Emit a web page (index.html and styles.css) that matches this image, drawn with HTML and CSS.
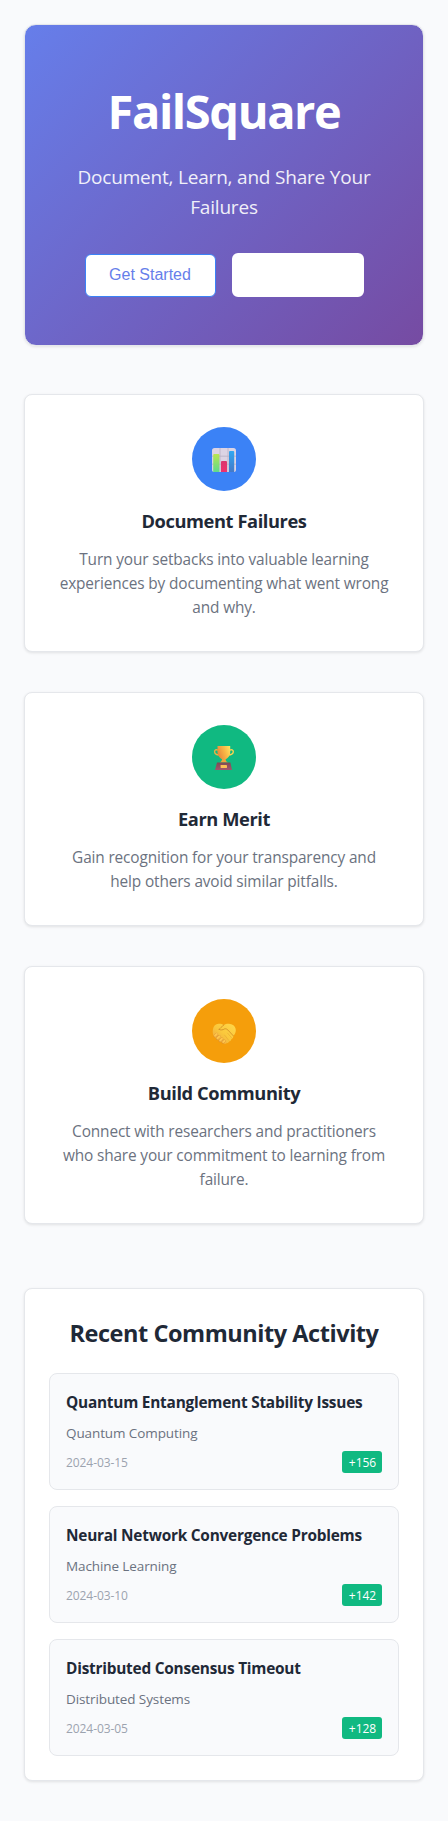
FILE: index.html
```html
<!DOCTYPE html>
<html lang="en">
<head>
<meta charset="utf-8">
<meta name="viewport" content="width=device-width, initial-scale=1">
<title>FailSquare</title>
<link rel="stylesheet" href="styles.css">
</head>
<body>
<main class="page">
  <section class="hero">
    <h1 class="hero-title">FailSquare</h1>
    <p class="hero-subtitle">Document, Learn, and Share Your Failures</p>
    <div class="hero-actions">
      <button class="btn btn-primary" type="button">Get Started</button>
      <button class="btn btn-blank" type="button"></button>
    </div>
  </section>

  <section class="features">
    <article class="card feature">
      <div class="feature-icon feature-icon-blue">
        <svg viewBox="0 0 64 64" width="64" height="64" aria-hidden="true">
          <defs>
            <linearGradient id="barGreen" x1="0" y1="0" x2="0" y2="1"><stop offset="0" stop-color="#b9e650"/><stop offset="1" stop-color="#5edb8c"/></linearGradient>
            <linearGradient id="barRed" x1="0" y1="0" x2="0" y2="1"><stop offset="0" stop-color="#d9366f"/><stop offset="1" stop-color="#f02f6e"/></linearGradient>
            <linearGradient id="barBlue" x1="0" y1="0" x2="0" y2="1"><stop offset="0" stop-color="#30a8f2"/><stop offset="1" stop-color="#4479c8"/></linearGradient>
          </defs>
          <rect x="20" y="21" width="24" height="24" rx="2.6" fill="#dcd4e4"/>
          <path d="M28 21v24M36 21v24M20 29.2h24M20 37.2h24" stroke="#b9b0c4" stroke-width=".8"/>
          <path d="M21.2 45V28a1 1 0 0 1 1-1h4.200a1 1 0 0 1 1 1v17z" fill="url(#barGreen)"/>
          <path d="M29 45V35a1 1 0 0 1 1-1h4a1 1 0 0 1 1 1v10z" fill="url(#barRed)"/>
          <path d="M37 45V25a1 1 0 0 1 1-1h3.200a1 1 0 0 1 1 1v20z" fill="url(#barBlue)"/>
        </svg>
      </div>
      <h3 class="feature-title">Document Failures</h3>
      <p class="feature-text">Turn your setbacks into valuable learning experiences by documenting what went wrong and why.</p>
    </article>

    <article class="card feature">
      <div class="feature-icon feature-icon-green">
        <svg viewBox="0 0 64 64" width="64" height="64" aria-hidden="true">
          <defs>
            <linearGradient id="cup" x1="0" y1=".4" x2="1" y2="0"><stop offset="0" stop-color="#e98b3c"/><stop offset=".5" stop-color="#f8b746"/><stop offset="1" stop-color="#ffe763"/></linearGradient>
            <linearGradient id="base" x1="0" y1="0" x2="0" y2="1"><stop offset="0" stop-color="#7d4a52"/><stop offset="1" stop-color="#a3566e"/></linearGradient>
          </defs>
          <path d="M26 25.2c-2-1-3.400-.2-3.400 1.500 0 2 2.100 3.300 4.500 3.200" fill="none" stroke="#efae42" stroke-width="1.4"/>
          <path d="M37.600 25.200c2-1 3.700-.2 3.700 1.500 0 2-2.400 3.300-4.800 3.200" fill="none" stroke="#ffd24e" stroke-width="1.4"/>
          <path d="M30.200 33h3.200c.1 2.400.6 3.500 2.600 4.600h-8.400c2-1.100 2.500-2.200 2.600-4.600z" fill="#eda53d"/>
          <path d="M25.500 21h12.700v6c0 4.300-3 6.300-4.900 7.500h-2.900c-1.900-1.200-4.900-3.200-4.900-7.500z" fill="url(#cup)"/>
          <path d="M25 37.400h13.400l1.600 7.600H23z" fill="url(#base)"/>
          <rect x="28.600" y="40" width="6.400" height="3" rx=".4" fill="#fbbf55"/>
        </svg>
      </div>
      <h3 class="feature-title">Earn Merit</h3>
      <p class="feature-text">Gain recognition for your transparency and help others avoid similar pitfalls.</p>
    </article>

    <article class="card feature">
      <div class="feature-icon feature-icon-amber">
        <svg viewBox="0 0 64 64" width="64" height="64" aria-hidden="true">
          <defs>
            <linearGradient id="hand" x1="0" y1="1" x2="1" y2="0"><stop offset="0" stop-color="#eda140"/><stop offset=".5" stop-color="#fac83c"/><stop offset="1" stop-color="#ffd84a"/></linearGradient>
          </defs>
          <path d="M21 30c.5-3 2.500-5 5.500-5.200 2-.1 3.700.2 5.300 1.300 1.800-1.200 4.200-1.500 6.200-1.100 3.500.5 5.800 3 5.800 6.300 0 2.600-1.200 4.400-2.600 5.700.3 1.500-.5 2.700-1.800 3-.2 1.500-1.100 2.400-2.400 2.500-.5 1.300-1.500 1.900-2.700 1.700-1 .9-2.300.8-3.200-.1l-8.600-6c-1.600-1.900-2.200-5-1.500-8.100z" fill="url(#hand)"/>
          <path d="M27 30.500c1.200-1.400 2.500-2.700 4.800-4.400M27.200 30.400c1.500 1.100 3.600.5 5.300-.5 1.400-.5 2.500.3 3.500 1.200l5.200 5.600" fill="none" stroke="#cf8824" stroke-width=".8" stroke-linecap="round"/>
          <path d="M35.500 34l4 4.700M32.500 36l4.200 5.300M30 38.500l3.800 4.500" fill="none" stroke="#e3a033" stroke-width=".5" stroke-linecap="round"/>
          <g fill="none" stroke="#d98e36" stroke-width="2.800" stroke-linecap="round"><path d="M23 37l1.700-1.700M25.300 39.500l1.900-1.900M28 41.700l1.700-1.700M31 43.300l1.200-1.200"/></g>
          <g fill="none" stroke="#ffc64b" stroke-width="2.100" stroke-linecap="round"><path d="M23.100 36.800l1.700-1.700M25.500 39.300l1.900-1.900M28.200 41.500l1.700-1.700M31.200 43.100l1.200-1.200"/></g>
        </svg>
      </div>
      <h3 class="feature-title">Build Community</h3>
      <p class="feature-text">Connect with researchers and practitioners who share your commitment to learning from failure.</p>
    </article>
  </section>

  <section class="card activity">
    <h2 class="activity-heading">Recent Community Activity</h2>
    <div class="activity-list">
      <article class="item">
        <h4 class="item-title">Quantum Entanglement Stability Issues</h4>
        <p class="item-field">Quantum Computing</p>
        <div class="item-meta"><span class="item-date">2024-03-15</span><span class="badge">+156</span></div>
      </article>
      <article class="item">
        <h4 class="item-title">Neural Network Convergence Problems</h4>
        <p class="item-field">Machine Learning</p>
        <div class="item-meta"><span class="item-date">2024-03-10</span><span class="badge">+142</span></div>
      </article>
      <article class="item">
        <h4 class="item-title">Distributed Consensus Timeout</h4>
        <p class="item-field">Distributed Systems</p>
        <div class="item-meta"><span class="item-date">2024-03-05</span><span class="badge">+128</span></div>
      </article>
    </div>
  </section>
</main>
</body>
</html>
```
FILE: styles.css
```css
* {
  box-sizing: border-box;
  margin: 0;
  padding: 0;
}

body {
  background: #f9fafc;
  color: #1f2937;
  font-family: "Segoe UI", "Open Sans", "Noto Sans", sans-serif;
}

.page {
  padding: 24px 24px 40px;
}

.hero {
  margin-bottom: 48px;
  padding: 48px;
  border: 1px solid #e5e7eb;
  border-radius: 12px;
  background: linear-gradient(135deg, #667eea 0%, #764ba2 100%);
  box-shadow: 0 1px 3px rgba(0, 0, 0, 0.1);
  color: #fff;
  text-align: center;
}

.hero-title {
  margin-bottom: 13px;
  font-size: 47px;
  font-weight: 700;
  line-height: 76px;
  letter-spacing: -1.4px;
}

.hero-subtitle {
  margin-bottom: 31px;
  font-size: 19px;
  line-height: 30px;
  letter-spacing: -0.2px;
  opacity: 0.9;
}

.hero-actions {
  display: flex;
  justify-content: center;
  align-items: center;
  gap: 16px;
}

.btn {
  border-radius: 6px;
  background: #fff;
  font: 16px/18px "Liberation Sans", Arial, sans-serif;
}

.btn-primary {
  width: 131px;
  height: 43px;
  padding-bottom: 1px;
  border: 1px solid #3b82f6;
  color: #667eea;
}

.btn-blank {
  width: 132px;
  height: 44px;
  border: 2px solid #fff;
}

.card {
  border: 1px solid #e5e7eb;
  border-radius: 8px;
  background: #fff;
  box-shadow: 0 1px 3px rgba(0, 0, 0, 0.1);
}

.features {
  display: grid;
  gap: 40px;
  margin-bottom: 64px;
}

.feature {
  padding: 32px 32px 31px;
  text-align: center;
}

.feature-icon {
  width: 64px;
  height: 64px;
  margin: 0 auto 16px;
  border-radius: 50%;
}

.feature-icon svg {
  display: block;
}

.feature-icon-blue {
  background: #3b82f6;
}

.feature-icon-green {
  background: #10b981;
}

.feature-icon-amber {
  background: #f59e0b;
}

.feature-title {
  margin-bottom: 13px;
  font-size: 18.3px;
  font-weight: 700;
  line-height: 28px;
  letter-spacing: -0.42px;
}

.feature-text {
  color: #6b7280;
  font-size: 15.4px;
  line-height: 24px;
  letter-spacing: -0.14px;
}

.activity {
  padding: 24px;
}

.activity-heading {
  margin-bottom: 20px;
  font-size: 23.5px;
  font-weight: 700;
  line-height: 40px;
  letter-spacing: -0.45px;
  text-align: center;
}

.activity-list {
  display: grid;
  gap: 16px;
}

.item {
  padding: 16px;
  border: 1px solid #e5e7eb;
  border-radius: 8px;
  background: #f9fafc;
}

.item-title {
  margin-bottom: 8px;
  font-size: 15.4px;
  font-weight: 700;
  line-height: 25px;
  letter-spacing: -0.23px;
}

.item-field {
  margin-bottom: 7px;
  color: #6b7280;
  font-size: 13.5px;
  line-height: 21px;
  letter-spacing: -0.1px;
}

.item-meta {
  display: flex;
  justify-content: space-between;
  align-items: center;
}

.item-date {
  padding-top: 2px;
  color: #9ca3af;
  font-size: 12px;
  line-height: 18px;
  letter-spacing: -0.08px;
}

.badge {
  width: 40px;
  padding: 3px 0 1px 1px;
  border-radius: 3px;
  background: #10b981;
  color: #fff;
  font-size: 12px;
  font-weight: 500;
  line-height: 18px;
  text-align: center;
}
```
